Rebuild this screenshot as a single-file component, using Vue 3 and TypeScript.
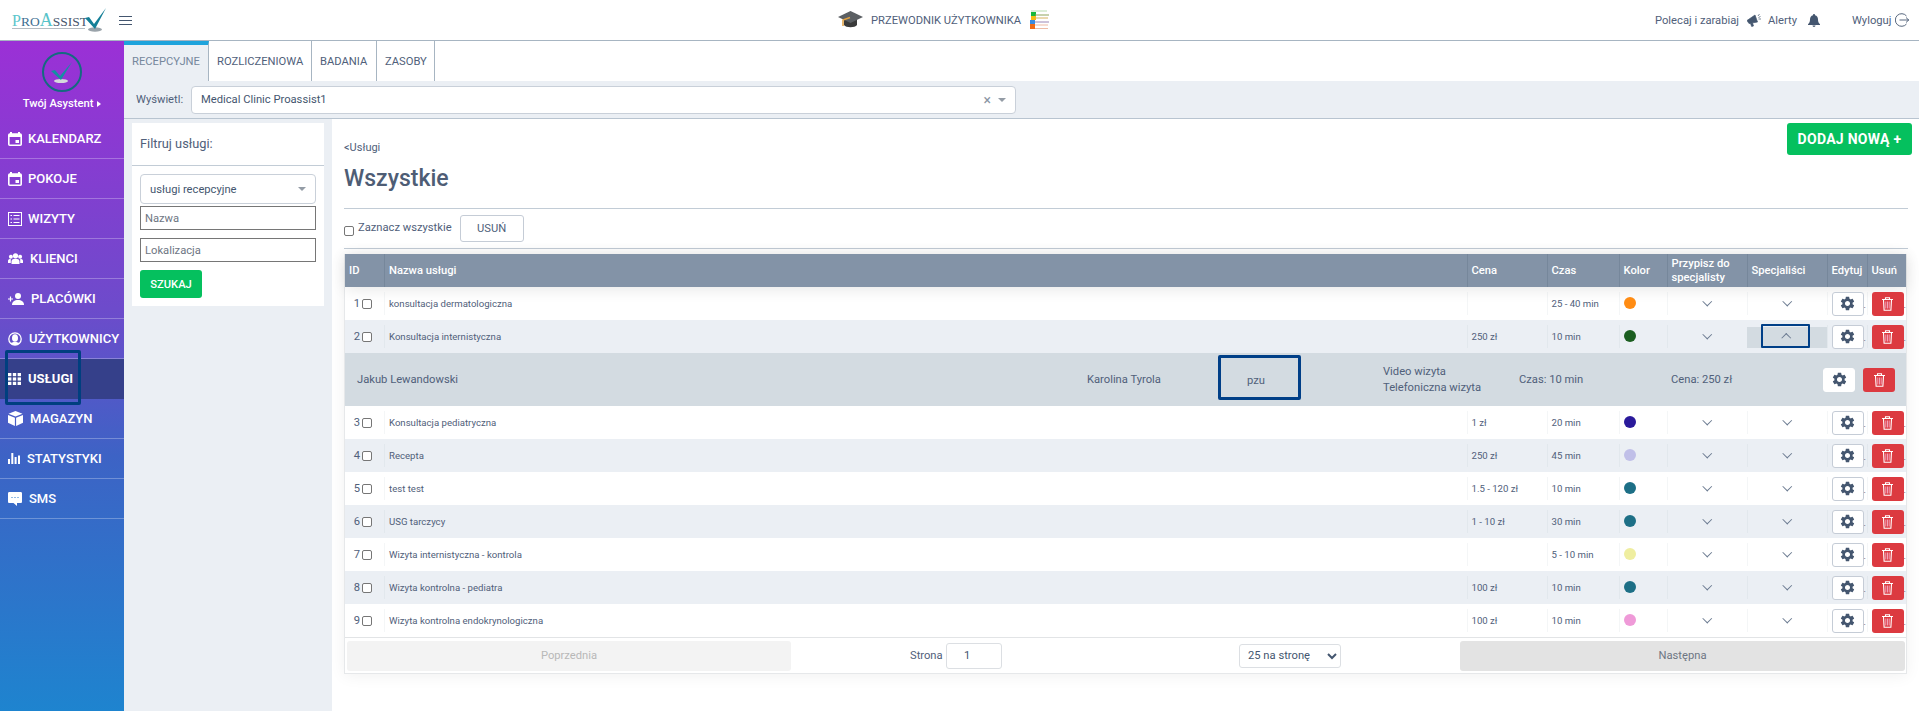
<script setup lang="ts">
interface NavItem { label: string; icon: string; w: number; active?: boolean }
interface Row { id: number; name: string; price: string; time: string; color: string; open?: boolean }

const nav: NavItem[] = [
  { label: 'KALENDARZ', icon: 'cal', w: 20 },
  { label: 'POKOJE', icon: 'cal', w: 20 },
  { label: 'WIZYTY', icon: 'list', w: 20 },
  { label: 'KLIENCI', icon: 'group', w: 22 },
  { label: 'PLACÓWKI', icon: 'add', w: 23 },
  { label: 'UŻYTKOWNICY', icon: 'user', w: 21 },
  { label: 'USŁUGI', icon: 'grid', w: 20, active: true },
  { label: 'MAGAZYN', icon: 'box', w: 22 },
  { label: 'STATYSTYKI', icon: 'bars', w: 19 },
  { label: 'SMS', icon: 'sms', w: 21 },
]
const rows: Row[] = [
  { id: 1, name: 'konsultacja dermatologiczna', price: '', time: '25 - 40 min', color: '#ff8c14' },
  { id: 2, name: 'Konsultacja internistyczna', price: '250 zł', time: '10 min', color: '#1b5e20', open: true },
  { id: 3, name: 'Konsultacja pediatryczna', price: '1 zł', time: '20 min', color: '#2a1a9b' },
  { id: 4, name: 'Recepta', price: '250 zł', time: '45 min', color: '#c0bfe8' },
  { id: 5, name: 'test test', price: '1.5 - 120 zł', time: '10 min', color: '#1d6f86' },
  { id: 6, name: 'USG tarczycy', price: '1 - 10 zł', time: '30 min', color: '#1d6f86' },
  { id: 7, name: 'Wizyta internistyczna - kontrola', price: '', time: '5 - 10 min', color: '#efeea0' },
  { id: 8, name: 'Wizyta kontrolna - pediatra', price: '100 zł', time: '10 min', color: '#1d6f86' },
  { id: 9, name: 'Wizyta kontrolna endokrynologiczna', price: '100 zł', time: '10 min', color: '#ef9ad8' },
]
const gear = 'M19.14 12.94c.04-.3.06-.61.06-.94 0-.32-.02-.64-.07-.94l2.03-1.58c.18-.14.23-.41.12-.61l-1.92-3.32c-.12-.22-.37-.29-.59-.22l-2.39.96c-.5-.38-1.03-.7-1.62-.94l-.36-2.54c-.04-.24-.24-.41-.48-.41h-3.84c-.24 0-.43.17-.47.41l-.36 2.54c-.59.24-1.13.57-1.62.94l-2.39-.96c-.22-.08-.47 0-.59.22L2.74 8.87c-.12.21-.08.47.12.61l2.03 1.58c-.05.3-.09.63-.09.94s.02.64.07.94l-2.03 1.58c-.18.14-.23.41-.12.61l1.92 3.32c.12.22.37.29.59.22l2.39-.96c.5.38 1.03.7 1.62.94l.36 2.54c.05.24.24.41.48.41h3.84c.24 0 .44-.17.47-.41l.36-2.54c.59-.24 1.13-.56 1.62-.94l2.39.96c.22.08.47 0 .59-.22l1.92-3.32c.12-.22.07-.47-.12-.61l-2.01-1.58zM12 15.6c-1.98 0-3.6-1.62-3.6-3.6s1.62-3.6 3.6-3.6 3.6 1.62 3.6 3.6-1.62 3.6-3.6 3.6z'
</script>

<template>
  <div class="page">
    <header class="topbar">
      <div class="logo">
        <div class="logo-word"><span class="l-p">P</span><span class="l-ro">RO</span><span class="l-a">A</span><span class="l-s">SSIST</span></div>
        <svg class="logo-check" width="24" height="26" viewBox="0 0 24 26">
          <ellipse cx="11" cy="22.5" rx="7" ry="2.2" fill="#9aa3aa" />
          <path d="M1 11 L5 10 L10 17 L22 1 L11 22 Z" fill="#147f97" />
        </svg>
      </div>
      <svg class="burger" width="13" height="9" viewBox="0 0 13 9"><path d="M0 .5h13M0 4.5h13M0 8.5h13" stroke="#44566f" stroke-width="1" /></svg>
      <div class="guide">
        <svg width="25" height="20" viewBox="0 0 25 20">
          <path d="M6 9v6c2 3 11 3 13 0V9z" fill="#3a3a3a" />
          <path d="M12.500 1 25 7 12.500 13 0 7z" fill="#5b5f63" />
          <path d="M12 7.500 5 10v6" fill="none" stroke="#e0a040" stroke-width="1.500" />
        </svg>
        <span>PRZEWODNIK UŻYTKOWNIKA</span>
        <svg width="19" height="20" viewBox="0 0 19 20">
          <path d="M1 1h16" stroke="#b7dcae" /><rect x="1" y="2" width="5" height="4" fill="#16b83a" /><path d="M5 5h14" stroke="#8ea35a" />
          <rect x="1" y="6" width="5" height="4" fill="#f4bd12" /><path d="M5 8h13" stroke="#d5b261" />
          <rect x="0" y="10" width="5" height="4" fill="#3a8be0" /><path d="M5 12h14" stroke="#9c86b5" />
          <rect x="0" y="14" width="5" height="5" fill="#f06a14" /><path d="M5 15h13M5 18.500h13" stroke="#eebba5" />
        </svg>
      </div>
      <div class="top-right">
        <span class="tr-a">Polecaj i zarabiaj</span>
        <svg class="tr-b" width="14" height="13" viewBox="0 0 14 13"><path d="M0 6.500 8 1l2.500 7L2 9.500zM3.500 9.500l1.200 3 1.800-.6L5.500 9zM11 2l1.500-2M11.500 5H14M11.500 3.500 13.500 2.500" fill="#44566f" stroke="#44566f" stroke-width=".7" /></svg>
        <span class="tr-c">Alerty</span>
        <svg class="tr-d" width="12" height="13" viewBox="0 0 12 13"><path d="M6 0c.7 0 1 .5 1 1.200C9 1.700 10 3.300 10 5.500c0 2.500.6 3.500 2 4.700V11H0v-.8c1.400-1.200 2-2.200 2-4.700C2 3.300 3 1.700 5 1.200 5 .5 5.300 0 6 0zM4.500 11.600h3C7.500 12.500 6.800 13 6 13s-1.500-.5-1.500-1.400z" fill="#44566f" /></svg>
        <span class="tr-e">Wyloguj</span>
        <svg class="tr-f" width="14" height="14" viewBox="0 0 14 14"><path d="M11.500 3A6.300 6.300 0 1 0 11.500 11M4.500 7H14M11 4.500 13.700 7 11 9.500" fill="none" stroke="#44566f" stroke-width=".9" /></svg>
      </div>
    </header>

    <div class="body">
      <aside class="sidebar">
        <div class="profile">
          <div class="avatar">
            <svg width="24" height="24" viewBox="0 0 24 24">
              <ellipse cx="11" cy="20" rx="7" ry="2" fill="#d6d9dc" />
              <path d="M1 10 L5 9 L10 15 L22 1 L11 19 Z" fill="#148fa3" />
            </svg>
          </div>
          <div class="assist">Twój Asystent <i class="tri"></i></div>
        </div>
        <nav class="nav">
          <div v-for="n in nav" :key="n.label" class="nav-item" :class="{ active: n.active }">
            <span class="nav-ico" :style="{ width: n.w + 'px' }">
              <svg v-if="n.icon === 'cal'" width="14" height="14" viewBox="0 0 14 14"><path d="M3 0v2M11 0v2" stroke="#fff" stroke-width="2" /><rect x=".8" y="2" width="12.400" height="11.200" fill="none" stroke="#fff" stroke-width="1.600" rx="1" /><path d="M1 2h12v3H1z" fill="#fff" /><rect x="7.500" y="8" width="3.500" height="3" fill="#fff" /></svg>
              <svg v-else-if="n.icon === 'list'" width="14" height="14" viewBox="0 0 14 14"><rect x=".5" y=".5" width="13" height="13" fill="none" stroke="#fff" /><path d="M2.500 3.500h1.500M5.500 3.500h6M2.500 7h1.500M5.500 7h6M2.500 10.500h1.500M5.500 10.500h6" stroke="#fff" stroke-width="1.100" /></svg>
              <svg v-else-if="n.icon === 'group'" width="15" height="11" viewBox="0 0 15 11"><circle cx="7.500" cy="2.800" r="2.600" fill="#fff" /><circle cx="2.900" cy="3.800" r="2" fill="#fff" /><circle cx="12.100" cy="3.800" r="2" fill="#fff" /><path d="M3.500 11V8.500c0-2 1.800-2.700 4-2.700s4 .7 4 2.700V11zM0 10V8c0-1.500 1-2 2.800-2v4zM15 10V8c0-1.500-1-2-2.800-2v4z" fill="#fff" /></svg>
              <svg v-else-if="n.icon === 'add'" width="16" height="12" viewBox="0 0 16 12"><path d="M0 6h5M2.500 3.500v5" stroke="#fff" stroke-width="1.200" /><circle cx="10" cy="3" r="3" fill="#fff" /><path d="M4 12c0-3.500 2.500-5 6-5s6 1.500 6 5z" fill="#fff" /></svg>
              <svg v-else-if="n.icon === 'user'" width="14" height="14" viewBox="0 0 14 14"><circle cx="7" cy="7" r="6.200" fill="none" stroke="#fff" stroke-width="1.300" /><ellipse cx="7" cy="6" rx="3" ry="3.800" fill="#fff" /><path d="M2.500 11.500C3.500 9.500 10.500 9.500 11.500 11.500 10 13.500 4 13.500 2.500 11.500z" fill="#fff" /></svg>
              <svg v-else-if="n.icon === 'grid'" width="13" height="12" viewBox="0 0 13 12" fill="#fff"><rect width="3.400" height="3.200" /><rect x="4.800" width="3.400" height="3.200" /><rect x="9.600" width="3.400" height="3.200" /><rect y="4.400" width="3.400" height="3.200" /><rect x="4.800" y="4.400" width="3.400" height="3.200" /><rect x="9.600" y="4.400" width="3.400" height="3.200" /><rect y="8.800" width="3.400" height="3.200" /><rect x="4.800" y="8.800" width="3.400" height="3.200" /><rect x="9.600" y="8.800" width="3.400" height="3.200" /></svg>
              <svg v-else-if="n.icon === 'box'" width="15" height="15" viewBox="0 0 15 15" fill="#fff"><path d="M7.500 0 14.500 2.800 7.500 5.600.5 2.800z" /><path d="M0 4 6.900 6.800V15L0 11.800zM15 4 8.100 6.800V15L15 11.800z" /></svg>
              <svg v-else-if="n.icon === 'bars'" width="12" height="11" viewBox="0 0 12 11" fill="#fff"><rect y="6" width="2" height="5" /><rect x="3.300" width="2" height="11" /><rect x="6.600" y="4" width="2" height="7" /><rect x="10" y="2.500" width="2" height="8.500" /></svg>
              <svg v-else width="14" height="14" viewBox="0 0 14 14"><path d="M1.500 0h11C13.500 0 14 .5 14 1.500v8c0 1-.5 1.500-1.500 1.500H9v3L5.500 11h-4C.5 11 0 10.500 0 9.500v-8C0 .5.500 0 1.500 0z" fill="#fff" /><path d="M3.500 5.500h1M6.500 5.500h1M9.500 5.500h1" stroke="#2577cb" /></svg>
            </span>
            <span class="nav-label">{{ n.label }}</span>
          </div>
          <div class="usl-mark"></div>
        </nav>
      </aside>

      <div class="content">
        <div class="tabs">
          <div class="tab current">RECEPCYJNE</div>
          <div class="tab">ROZLICZENIOWA</div>
          <div class="tab">BADANIA</div>
          <div class="tab">ZASOBY</div>
        </div>
        <div class="show-row">
          <span class="show-label">Wyświetl:</span>
          <div class="show-select">
            <span>Medical Clinic Proassist1</span>
            <span class="sel-end"><span class="x">×</span><i class="caret"></i></span>
          </div>
        </div>

        <div class="work">
          <aside class="filter">
            <div class="filter-title">Filtruj usługi:</div>
            <div class="filter-body">
              <div class="f-select"><span>usługi recepcyjne</span><i class="caret"></i></div>
              <input class="f-input" placeholder="Nazwa" />
              <input class="f-input second" placeholder="Lokalizacja" />
              <button class="f-btn">SZUKAJ</button>
            </div>
          </aside>

          <main class="main">
            <div class="main-head">
              <div>
                <div class="crumb">&lt;Usługi</div>
                <h1>Wszystkie</h1>
              </div>
              <button class="add">DODAJ NOWĄ +</button>
            </div>
            <div class="bulk">
              <label class="check-all"><input type="checkbox" class="cb" /><span>Zaznacz wszystkie</span></label>
              <button class="del-all">USUŃ</button>
            </div>

            <section class="table">
              <div class="grid thead">
                <div>ID</div><div>Nazwa usługi</div><div>Cena</div><div>Czas</div><div>Kolor</div>
                <div class="wrap">Przypisz do specjalisty</div><div>Specjaliści</div><div>Edytuj</div><div>Usuń</div>
              </div>
              <template v-for="r in rows" :key="r.id">
                <div class="grid trow" :class="{ alt: r.id % 2 === 0 }">
                  <div class="c c-id"><span>{{ r.id }}</span><input type="checkbox" class="cb" /></div>
                  <div class="c c-name">{{ r.name }}</div>
                  <div class="c">{{ r.price }}</div>
                  <div class="c">{{ r.time }}</div>
                  <div class="c"><i class="dot" :style="{ background: r.color }"></i></div>
                  <div class="c center"><i class="chev"></i></div>
                  <div class="c center" :class="{ 'spec-open': r.open }">
                    <i class="chev" :class="{ up: r.open }"></i>
                    <span v-if="r.open" class="chev-mark"></span>
                  </div>
                  <div class="c act">
                    <button class="btn-gear"><svg width="17" height="17" viewBox="0 0 24 24"><path :d="gear" fill="#44566f" /></svg></button><span class="pt">.</span>
                  </div>
                  <div class="c act">
                    <button class="btn-trash"><svg width="11" height="14" viewBox="0 0 11 14"><path d="M0 2.500h11M3.500 2.500V.7h4v1.800M1.500 3l.6 10.300h6.800L9.500 3" fill="none" stroke="#fff" stroke-width="1.100" /><path d="M3.800 4.500v7M5.500 4.500v7M7.200 4.500v7" stroke="#f2a0b8" stroke-width="1" /></svg></button><span class="pt">.</span>
                  </div>
                </div>
                <div v-if="r.open" class="detail">
                  <div class="d-name">Jakub Lewandowski</div>
                  <div class="d-who">Karolina Tyrola</div>
                  <div class="d-pzu">pzu</div>
                  <div class="d-kinds"><div>Video wizyta</div><div>Telefoniczna wizyta</div></div>
                  <div class="d-time">Czas: 10 min</div>
                  <div class="d-price">Cena: 250 zł</div>
                  <button class="btn-gear d-gear"><svg width="17" height="17" viewBox="0 0 24 24"><path :d="gear" fill="#44566f" /></svg></button>
                  <button class="btn-trash"><svg width="11" height="14" viewBox="0 0 11 14"><path d="M0 2.500h11M3.500 2.500V.7h4v1.800M1.500 3l.6 10.300h6.800L9.500 3" fill="none" stroke="#fff" stroke-width="1.100" /><path d="M3.800 4.500v7M5.500 4.500v7M7.200 4.500v7" stroke="#f2a0b8" stroke-width="1" /></svg></button>
                </div>
              </template>
              <div class="pager">
                <button class="pg-btn prev">Poprzednia</button>
                <div class="pg-mid">
                  <span>Strona</span><input class="pg-input" value="1" />
                  <select class="pg-select"><option>25 na stronę</option></select>
                </div>
                <button class="pg-btn next">Następna</button>
              </div>
            </section>
          </main>
        </div>
      </div>
    </div>
  </div>
</template>

<style>
html, body { margin: 0; height: 100%; overflow: hidden; background: #fff; }
</style>

<style scoped>
* { box-sizing: border-box; }
.page { width: 1919px; height: 711px; display: flex; flex-direction: column; font-family: Roboto, "Noto Sans", sans-serif; color: #50607a; font-size: 11.2px; overflow: hidden; }
.topbar { height: 41px; flex: none; border-bottom: 1px solid #a7b5c2; position: relative; display: flex; align-items: center; padding-left: 12px; }
.logo { width: 107px; height: 41px; display: flex; position: relative; flex: none; }
.logo-word { font-family: "Liberation Serif", serif; font-size: 13.500px; line-height: 16px; color: #46566c; border-bottom: 1px solid #b5bcc2; height: 17px; margin-top: 12px; width: 73px; flex: none; white-space: nowrap; }
.l-p { color: #5cc6cc; font-size: 16px; }
.l-ro { color: #3f6f92; }
.l-a { color: #58c3c9; font-size: 18px; }
.l-s { color: #46566c; }
.logo-check { margin: 7px 0 0 -1px; flex: none; }
.burger { flex: none; }
.guide { position: absolute; left: 838px; top: 9px; display: flex; align-items: center; height: 22px; }
.guide span { margin: 0 9px 0 8px; width: 150px; white-space: nowrap; }
.top-right { position: absolute; left: 1655px; top: 13px; display: flex; align-items: center; height: 14px; white-space: nowrap; }
.tr-b { margin-left: 8px; flex: none; }
.tr-c { margin-left: 7px; }
.tr-d { margin-left: 11px; flex: none; }
.tr-e { margin-left: 32px; }
.tr-f { margin-left: 4px; flex: none; }

.body { flex: 1; display: flex; min-height: 0; }
.sidebar { width: 124px; flex: none; background: linear-gradient(180deg, #9b30d6 0%, #6d4bcb 40%, #3d63c5 62%, #1e84cf 100%); color: #fff; }
.profile { height: 78px; display: flex; flex-direction: column; align-items: center; padding-top: 11px; }
.avatar { width: 40px; height: 40px; flex: none; border-radius: 50%; border: 2px solid #146a80; display: flex; align-items: center; justify-content: center; padding-top: 2px; }
.assist { font-size: 11.2px; font-weight: 500; margin-top: 5px; line-height: 14px; white-space: nowrap; }
.tri { display: inline-block; border-left: 4px solid #fff; border-top: 3.500px solid transparent; border-bottom: 3.500px solid transparent; margin-left: 1px; }
.nav { position: relative; }
.nav-item { height: 40px; border-bottom: 1px solid rgba(255, 255, 255, .28); display: flex; align-items: center; padding-left: 8px; font-weight: 500; font-size: 13px; color: #fff; }
.nav-item.active { background: #35408a; border-bottom-color: transparent; font-weight: 700; }
.nav-ico { display: flex; align-items: center; flex: none; }
.usl-mark { position: absolute; left: 5px; top: 231px; width: 76px; height: 55px; border: 3px solid #003f7f; border-radius: 2px; pointer-events: none; }

.content { flex: 1; min-width: 0; display: flex; flex-direction: column; background: #ebeff4; }
.tabs { height: 40px; flex: none; background: #fff; display: flex; }
.tab { height: 40px; border-right: 1px solid #a7b5c2; display: flex; align-items: center; padding: 0 8px; }
.tab.current { width: 85px; background: #ebeff4; border-top: 4px solid #1ea3dc; padding-bottom: 4px; color: #75879c; padding-right: 0; }
.tab:nth-child(2) { width: 103px; }
.tab:nth-child(3) { width: 65px; }
.tab:nth-child(4) { width: 58px; }
.show-row { height: 38px; flex: none; border-bottom: 1px solid #b8c4d0; display: flex; align-items: center; padding-left: 12px; }
.show-label { width: 55px; flex: none; }
.show-select { width: 825px; height: 28px; background: #fff; border: 1px solid #c9d0d9; border-radius: 4px; display: flex; align-items: center; justify-content: space-between; padding: 0 9px; color: #44566f; }
.sel-end { display: flex; align-items: center; gap: 7px; }
.x { font-size: 14px; color: #8a94a3; }
.caret { display: inline-block; border-top: 4px solid #949ca6; border-left: 4px solid transparent; border-right: 4px solid transparent; }

.work { flex: 1; display: flex; padding-left: 8px; min-height: 0; }
.filter { width: 192px; height: 183px; margin-top: 4px; flex: none; background: #fff; }
.filter-title { height: 43px; border-bottom: 1px solid #c2ccd6; padding: 12px 8px 0; font-size: 12.800px; line-height: 18px; }
.filter-body { padding: 8px; display: flex; flex-direction: column; align-items: flex-start; }
.f-select { width: 100%; height: 30px; border: 1px solid #c9d0d9; border-radius: 4px; display: flex; align-items: center; justify-content: space-between; padding: 0 9px; color: #44566f; }
.f-input { width: 100%; height: 24px; margin-top: 2px; border: 1px solid #767676; padding: 0 4px; font-family: inherit; font-size: 11.2px; outline: none; }
.f-input::placeholder { color: #6e7683; }
.f-input.second { margin-top: 8px; }
.f-btn { margin-top: 8px; width: 62px; height: 28px; background: #05c05e; border: 0; border-radius: 3px; color: #fff; font: 500 11.2px Roboto, sans-serif; }

.main { flex: 1; margin-left: 8px; background: #fff; padding: 0 11px 0 12px; min-width: 0; }
.main-head { height: 90px; display: flex; justify-content: space-between; border-bottom: 1px solid #c2ccd6; }
.crumb { margin-top: 22px; font-size: 11px; line-height: 14px; }
h1 { margin: 10px 0 0; font-size: 23px; font-weight: 500; line-height: 28px; color: #4e5d75; }
.add { margin: 4px -4px 0 0; width: 125px; height: 32px; background: #05c05e; border: 0; border-radius: 3px; color: #fff; font: 700 14px Roboto, sans-serif; letter-spacing: .02em; }
.bulk { height: 40px; border-bottom: 1px solid #c2ccd6; display: flex; align-items: center; }
.check-all { display: flex; align-items: center; }
.cb { appearance: none; width: 10px; height: 10px; margin: 0; border: 1px solid #767676; border-radius: 2px; background: #fff; flex: none; }
.check-all span { margin-left: 4px; position: relative; top: -1px; }
.check-all .cb { position: relative; top: 2px; }
.del-all { margin-left: 8px; width: 64px; height: 27px; background: #fff; border: 1px solid #c5ccd6; border-radius: 3px; color: #50607a; font: 11.2px Roboto, sans-serif; }

.table { margin-top: 5px; width: 1563px; border: 1px solid #e6e8ea; border-top: 0; box-shadow: 0 2px 15px rgba(0, 0, 0, .06); }
.grid { display: grid; grid-template-columns: 39px 1082.500px 80px 72px 48px 80px 80px 40px 41px; }
.thead { height: 33px; background: #8393a7; color: #fff; font-weight: 500; box-shadow: 0 2px 15px rgba(0, 0, 0, .1); position: relative; }
.thead > div { display: flex; align-items: center; padding-left: 4px; border-left: 1px solid #76879b; line-height: 14px; }
.thead > div:first-child { border-left: 0; }
.trow { height: 33px; align-items: center; font-size: 9.600px; }
.trow.alt { background: #ebeff4; }
.c { height: 23px; display: flex; align-items: center; padding-left: 4px; border-left: 1px solid rgba(180, 190, 200, .14); white-space: nowrap; position: relative; }
.c-id { border-left: 0; justify-content: flex-end; gap: 2px; padding-right: 12px; font-size: 11.2px; }
.center { justify-content: center; padding-left: 0; }
.dot { width: 12px; height: 12px; border-radius: 50%; display: block; margin-top: -2px; }
.chev { width: 6.500px; height: 6.500px; border-right: 1px solid #6a7a90; border-bottom: 1px solid #6a7a90; transform: rotate(45deg); margin-top: -4px; display: block; }
.chev.up { transform: rotate(225deg); margin-top: 3px; }
.spec-open { background: #d3dbe1; border-left: 0; height: 21px; margin-top: 1px; }
.chev-mark { position: absolute; left: 14px; top: -3px; width: 49px; height: 24px; border: 2px solid #003f87; border-radius: 1px; }
.act { padding-left: 4px; font-size: 9px; }
.pt { align-self: flex-end; margin-bottom: 5px; line-height: 1; color: #44566f; }
.btn-gear { width: 32px; height: 24px; flex: none; background: #fff; border: 1px solid #c5ccd6; border-radius: 3px; display: flex; align-items: center; justify-content: center; padding: 0 0 1px; }
.btn-trash { width: 32px; height: 24px; flex: none; background: #dc3a40; border: 0; border-radius: 3px; display: flex; align-items: center; justify-content: center; padding: 0; }
.detail { height: 53px; background: #d3dbe1; display: flex; align-items: center; position: relative; padding-left: 12px; }
.d-name { width: 730px; flex: none; }
.d-who { width: 131px; flex: none; }
.d-pzu { width: 83px; height: 45px; flex: none; margin-bottom: 4px; border: 3px solid #003f87; border-radius: 2px; display: flex; align-items: center; padding: 5px 0 0 26px; }
.d-kinds { margin-left: 82px; width: 136px; flex: none; line-height: 16px; }
.d-time { width: 152px; flex: none; }
.d-price { width: 152px; flex: none; }
.d-gear { margin-right: 8px; border-color: #fff; }
.pager { height: 36px; display: flex; align-items: center; padding: 0 1px 0 2px; border-top: 1px solid #e2e4e6; }
.pg-btn { height: 30px; border: 0; border-radius: 3px; font: 11.2px Roboto, sans-serif; flex: none; }
.prev { width: 444px; background: #f3f3f3; color: #b8b8b8; }
.next { width: 445px; background: #e3e3e3; color: #6e7683; }
.pg-mid { flex: 1; position: relative; display: flex; align-items: center; padding-left: 119px; }
.pg-mid > span { width: 33px; }
.pg-input { width: 56px; height: 26px; margin-left: 3px; border: 1px solid #dcdfe3; border-radius: 3px; padding: 0 0 0 17px; font: 11.2px Roboto, sans-serif; color: #44566f; outline: none; }
.pg-select { margin-left: 237px; width: 102px; height: 24px; border: 1px solid #dcdfe3; border-radius: 3px; background: #fff; color: #44566f; font: 11.2px Roboto, sans-serif; padding-left: 4px; }
</style>
